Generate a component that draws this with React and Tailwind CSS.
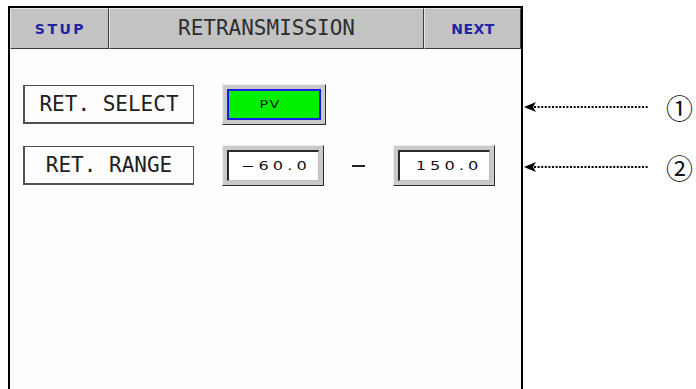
import React from "react";

const mono = { fontFamily: '"DejaVu Sans Mono", "Liberation Mono", monospace' };
const wide = { fontFamily: '"DejaVu Sans", "Liberation Sans", sans-serif' };

const HeaderCell = ({ className = "", children }) => (
  <div
    className={`h-full flex items-center justify-center bg-[#c3c3c3] border-t border-l border-[#e6e6e6] border-r border-b border-r-[#3c3c3c] border-b-[#3c3c3c] ${className}`}
  >
    {children}
  </div>
);

const Label = ({ children }) => (
  <div
    className="w-[171px] h-[39px] flex items-center justify-center border border-[#505050] border-l-2 border-b-2 text-[21px] text-[#202020] whitespace-pre leading-none"
    style={mono}
  >
    {children}
  </div>
);

const ValueBox = ({ children }) => (
  <div className="w-[102px] h-[41px] p-[4px] bg-[#c9c9c9] border-t border-l border-[#ececec] border-r border-b border-r-[#2e2e2e] border-b-[#2e2e2e]">
    <div className="h-full flex items-center justify-end pr-[7px] bg-white border-t-2 border-l-2 border-[#2a2a2a] border-r border-b border-r-[#bdbdbd] border-b-[#bdbdbd]">
      <span
        className="inline-block origin-right scale-x-[1.35] text-[12px] text-[#111] tracking-[3px] leading-none"
        style={wide}
      >
        {children}
      </span>
    </div>
  </div>
);

const Arrow = ({ num }) => (
  <div className="flex items-center h-[26px]">
    <svg width="126" height="12" viewBox="0 0 126 12">
      <polygon points="0,6 12,1 9,6 12,11" fill="#000" />
      <line x1="10" y1="6" x2="124" y2="6" stroke="#000" strokeWidth="2" strokeDasharray="2 1.6" />
    </svg>
    <span
      className="ml-[16px] text-[27px] leading-none text-[#111]"
      style={{ fontFamily: '"Noto Sans CJK KR", "DejaVu Sans", sans-serif' }}
    >
      {num}
    </span>
  </div>
);

export default function App() {
  return (
    <div className="w-[696px] h-[389px] overflow-hidden bg-white flex items-start pt-[6px] pl-[8px]">
      {/* Panel */}
      <div className="w-[515px] h-[400px] border-2 border-b-0 border-black bg-[#fdfdfd] flex flex-col">
        {/* Header */}
        <div className="h-[41px] flex">
          <HeaderCell className="w-[99px]">
            <span className="text-[14px] font-bold text-[#2323a6] tracking-[2.5px] pl-[2px] leading-none" style={wide}>
              STUP
            </span>
          </HeaderCell>
          <HeaderCell className="flex-1">
            <span className="text-[21px] text-[#2e2e2e] leading-none" style={mono}>
              RETRANSMISSION
            </span>
          </HeaderCell>
          <HeaderCell className="w-[97px]">
            <span className="text-[14px] font-bold text-[#2323a6] tracking-[0.5px] pl-[1px] leading-none" style={wide}>
              NEXT
            </span>
          </HeaderCell>
        </div>

        {/* Content */}
        <div className="flex flex-col gap-[20px] pt-[35px] pl-[13px]">
          <div className="flex items-center gap-[28px]">
            <Label>RET. SELECT</Label>
            <div className="w-[104px] h-[41px] p-[4px] bg-[#c9c9c9] border-t border-l border-[#ececec] border-r border-b border-r-[#2e2e2e] border-b-[#2e2e2e]">
              <div className="h-full flex items-center justify-center pr-[8px] bg-[#00f000] border-2 border-[#1a1af0]">
                <span
                  className="inline-block scale-x-[1.3] text-[11px] text-[#111] tracking-[1px] leading-none"
                  style={wide}
                >
                  PV
                </span>
              </div>
            </div>
          </div>
          <div className="flex items-center">
            <Label>RET. RANGE</Label>
            <div className="ml-[28px]">
              <ValueBox>−60.0</ValueBox>
            </div>
            <div className="w-[69px] flex justify-center">
              <div className="w-[13px] h-[2px] bg-[#222]" />
            </div>
            <ValueBox>150.0</ValueBox>
          </div>
        </div>
      </div>

      {/* Annotations */}
      <div className="flex flex-col gap-[34px] pt-[88px] pl-[1px]">
        <Arrow num="①" />
        <Arrow num="②" />
      </div>
    </div>
  );
}
